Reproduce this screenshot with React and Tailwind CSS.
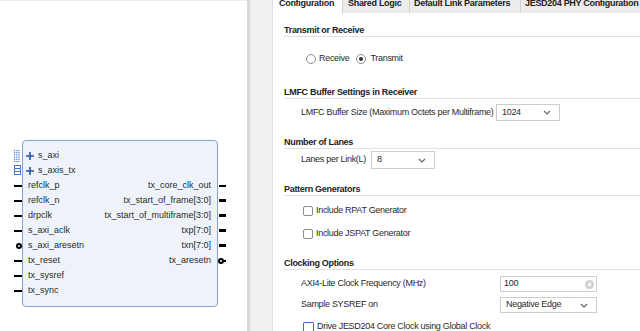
import React from "react";

const leftPorts = [
  { name: "s_axi", plus: true },
  { name: "s_axis_tx", plus: true },
  { name: "refclk_p" },
  { name: "refclk_n" },
  { name: "drpclk" },
  { name: "s_axi_aclk" },
  { name: "s_axi_aresetn", inv: true },
  { name: "tx_reset" },
  { name: "tx_sysref" },
  { name: "tx_sync" },
];

const rightPorts = [
  { name: "" },
  { name: "" },
  { name: "tx_core_clk_out" },
  { name: "tx_start_of_frame[3:0]", bus: true },
  { name: "tx_start_of_multiframe[3:0]", bus: true },
  { name: "txp[7:0]", bus: true },
  { name: "txn[7:0]", bus: true },
  { name: "tx_aresetn", inv: true },
];

function Plus() {
  return (
    <svg width="8" height="8" viewBox="0 0 8 8" className="-ml-[2px] mr-[4px] shrink-0">
      <path d="M4 0v8M0 4h8" stroke="#2456a8" strokeWidth="1.6" />
    </svg>
  );
}

function BusIcon() {
  // little dotted interface glyph next to the AXI ports
  const dots = [];
  for (let r = 0; r < 6; r++) {
    for (let c = 0; c < 3; c++) {
      dots.push(<rect key={r + "-" + c} x={c * 2.2} y={r * 2.2} width="1.2" height="1.2" fill="#4a78c0" />);
    }
  }
  return (
    <svg width="7" height="26" viewBox="0 0 7 26">
      {dots}
      <rect x="0.5" y="15.5" width="6" height="9" fill="none" stroke="#4a78c0" strokeWidth="1" />
      <path d="M1 18.5h5M1 21.5h5" stroke="#4a78c0" strokeWidth="1" />
    </svg>
  );
}

function Block() {
  return (
    <div className="flex items-start">
      {/* left pins */}
      <div className="w-[10px] pt-[8px]">
        <div className="flex h-[30px] justify-end pr-[1px] pt-[2px]">
          <BusIcon />
        </div>
        {leftPorts.slice(2).map((p) => (
          <div key={p.name} className="flex h-[15px] items-center justify-end">
            {p.inv ? (
              <div className="h-[6px] w-[6px] rounded-full border-2 border-black" />
            ) : (
              <div className="h-[2px] w-[8px] bg-black" />
            )}
          </div>
        ))}
      </div>

      {/* body */}
      <div className="flex h-[167px] w-[196px] justify-between rounded-[4px] border border-[#86a3cf] bg-[#eef3f9] pb-[7px] pl-[5px] pr-[6px] pt-[7px] text-[9px] text-[#2a2a2a]">
        <div>
          {leftPorts.map((p) => (
            <div key={p.name} className="flex h-[15px] items-center">
              {p.plus && <Plus />}
              <span>{p.name}</span>
            </div>
          ))}
        </div>
        <div className="text-right">
          {rightPorts.map((p, i) => (
            <div key={i} className="flex h-[15px] items-center justify-end">
              {p.name}
            </div>
          ))}
        </div>
      </div>

      {/* right pins */}
      <div className="w-[10px] pt-[8px]">
        {rightPorts.map((p, i) => (
          <div key={i} className="flex h-[15px] items-center">
            {p.name === "" ? null : p.inv ? (
              <>
                <div className="h-[6px] w-[6px] rounded-full border-2 border-black" />
                <div className="h-[2px] w-[2px] bg-black" />
              </>
            ) : (
              <div className={(p.bus ? "h-[3px]" : "h-[2px]") + " ml-[1px] w-[7px] bg-black"} />
            )}
          </div>
        ))}
      </div>
    </div>
  );
}

function Chevron() {
  return (
    <svg width="8" height="5" viewBox="0 0 8 5">
      <path d="M1 1l3 3 3-3" stroke="#666" strokeWidth="1.2" fill="none" />
    </svg>
  );
}

function Select({ value, className }) {
  return (
    <div className={"flex shrink-0 items-center justify-between border border-[#cdcdcd] bg-white pl-[5px] pr-[8px] " + className}>
      <span>{value}</span>
      <Chevron />
    </div>
  );
}

function Heading({ children, className }) {
  return (
    <div className={"ml-[11px] h-[13px] border-b border-[#e2e2e2] font-bold leading-[12px] text-[#222] " + className}>
      {children}
    </div>
  );
}

function Check({ label, blue, className }) {
  return (
    <div className={"ml-[30px] flex h-[12px] items-center " + className}>
      <div
        className={
          blue
            ? "h-[11px] w-[11px] rounded-[1px] border border-[#3b70c2] bg-white"
            : "h-[10px] w-[10px] rounded-[2px] border border-[#8c8c8c] bg-white"
        }
      />
      <span className="ml-[3px]">{label}</span>
    </div>
  );
}

export default function App() {
  return (
    <div className="flex h-[331px] w-[640px] overflow-hidden bg-white font-['Liberation_Sans',Arial,sans-serif]">
      {/* diagram canvas */}
      <div className="w-[247px] shrink-0 border-t border-[#ececec] bg-white pl-[12px] pt-[139px]">
        <Block />
      </div>

      <div className="w-[3px] shrink-0 bg-[#d9d9d9]" />
      <div className="w-[23px] shrink-0 border-r border-[#dedede] bg-[#f1f1f1]" />

      {/* settings panel */}
      <div className="min-w-0 flex-1 text-[9px] tracking-[-0.3px] text-[#2a2a2a]">
        <div className="flex h-[13px] overflow-hidden bg-[#ececec] font-bold text-[#222]">
          <div className="w-[70px] shrink-0 border-r border-[#d2d2d2] bg-white pl-[6px]">
            <div className="-mt-[1px] leading-[9px]">Configuration</div>
          </div>
          <div className="w-[67px] shrink-0 border-r border-[#d2d2d2] pl-[5px]">
            <div className="-mt-[1px] leading-[9px]">Shared Logic</div>
          </div>
          <div className="w-[111px] shrink-0 border-r border-[#d2d2d2] pl-[4px]">
            <div className="-mt-[1px] leading-[9px]">Default Link Parameters</div>
          </div>
          <div className="shrink-0 whitespace-nowrap pl-[4px]">
            <div className="-mt-[1px] leading-[9px]">JESD204 PHY Configuration</div>
          </div>
        </div>

        <Heading className="mt-[11px]">Transmit or Receive</Heading>
        <div className="ml-[33px] mt-[15px] flex h-[14px] items-center">
          <div className="h-[10px] w-[10px] rounded-full border border-[#8c8c8c] bg-white" />
          <span className="ml-[3px]">Receive</span>
          <div className="ml-[7px] flex h-[10px] w-[10px] items-center justify-center rounded-full border border-[#8c8c8c] bg-white">
            <div className="h-[4px] w-[4px] rounded-full bg-[#333]" />
          </div>
          <span className="ml-[4px]">Transmit</span>
        </div>

        <Heading className="mt-[20px]">LMFC Buffer Settings in Receiver</Heading>
        <div className="ml-[28px] mt-[5px] flex h-[17px] items-center">
          <span className="w-[195px] shrink-0">LMFC Buffer Size (Maximum Octets per Multiframe)</span>
          <Select value="1024" className="h-[17px] w-[64px]" />
        </div>

        <Heading className="mt-[15px]">Number of Lanes</Heading>
        <div className="ml-[28px] mt-[2px] flex h-[18px] items-center">
          <span>Lanes per Link(L)</span>
          <Select value="8" className="ml-[5px] h-[18px] w-[64px]" />
        </div>

        <Heading className="mt-[14px]">Pattern Generators</Heading>
        <Check label="Include RPAT Generator" className="mt-[9px]" />
        <Check label="Include JSPAT Generator" className="mt-[11px]" />

        <Heading className="mt-[17px]">Clocking Options</Heading>
        <div className="ml-[28px] mt-[6px] flex h-[16px] items-center">
          <span className="w-[199px] shrink-0">AXI4-Lite Clock Frequency (MHz)</span>
          <div className="flex h-[16px] w-[97px] items-center justify-between border border-[#cdcdcd] bg-white pl-[3px] pr-[2px]">
            <span>100</span>
            <svg width="9" height="9" viewBox="0 0 9 9">
              <circle cx="4.5" cy="4.5" r="4.5" fill="#cfcfcf" />
              <path d="M3 3l3 3M6 3l-3 3" stroke="#fff" strokeWidth="1.2" />
            </svg>
          </div>
        </div>
        <div className="ml-[28px] mt-[5px] flex h-[16px] items-center">
          <span className="w-[199px] shrink-0">Sample SYSREF on</span>
          <Select value="Negative Edge" className="h-[16px] w-[97px]" />
        </div>
        <Check label="Drive JESD204 Core Clock using Global Clock" blue className="mt-[8px]" />
      </div>
    </div>
  );
}
